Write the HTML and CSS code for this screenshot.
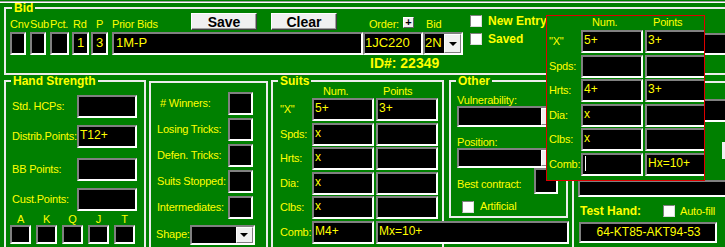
FILE: index.html
```html
<!DOCTYPE html>
<html lang="en">
<head>
    <meta charset="UTF-8">
    <title>Bid Entry</title>
    <link rel="stylesheet" href="styles.css">
</head>
<body>
    <div class="topline"></div>

    <fieldset class="frame bid-frame">
        <legend>Bid</legend>
        <div class="bid-grid">
            <span class="lbl">Cnv</span>
            <span class="lbl">Sub</span>
            <span class="lbl">Pct.</span>
            <span class="lbl lbl-rd">Rd</span>
            <span class="lbl lbl-p">P</span>
            <div class="prior-head">
                <span class="lbl prior-lbl">Prior Bids</span>
                <button class="btn">Save</button>
                <button class="btn clear-btn">Clear</button>
            </div>
            <div class="order-head">
                <span class="lbl">Order:</span>
                <span class="plus-btn">+</span>
            </div>
            <span class="lbl lbl-bid">Bid</span>
            <div class="flags">
                <div class="flag"><span class="check"></span>New Entry</div>
                <div class="flag"><span class="check"></span>Saved</div>
            </div>

            <div class="box big w16"></div>
            <div class="box big w16"></div>
            <div class="box big w19"></div>
            <div class="box big w17 centered">1</div>
            <div class="box big w17 centered">3</div>
            <div class="box big prior-box">1M-P</div>
            <div class="box big order-box">1JC220</div>
            <div class="box big combo bid-combo">2N<span class="drop"></span></div>
            <div class="box big side-box"></div>

            <div class="id-line">ID#: 22349</div>
        </div>
    </fieldset>

    <div class="lower">
        <fieldset class="frame hs-frame">
            <legend>Hand Strength</legend>
            <div class="hs-row"><span class="lbl">Std. HCPs:</span><div class="box hs-box"></div></div>
            <div class="hs-row"><span class="lbl">Distrib.Points:</span><div class="box hs-box">T12+</div></div>
            <div class="hs-row bb-row"><span class="lbl">BB Points:</span><div class="box hs-box"></div></div>
            <div class="hs-row"><span class="lbl">Cust.Points:</span><div class="box hs-box"></div></div>
            <div class="honors">
                <div class="honor"><span class="lbl">A</span><div class="box honor-box"></div></div>
                <div class="honor"><span class="lbl">K</span><div class="box honor-box"></div></div>
                <div class="honor"><span class="lbl">Q</span><div class="box honor-box"></div></div>
                <div class="honor"><span class="lbl">J</span><div class="box honor-box"></div></div>
                <div class="honor"><span class="lbl">T</span><div class="box honor-box"></div></div>
            </div>
        </fieldset>

        <fieldset class="frame win-frame">
            <div class="win-grid">
                <span class="lbl win-first"># Winners:</span><div class="box win-box"></div>
                <span class="lbl">Losing Tricks:</span><div class="box win-box"></div>
                <span class="lbl">Defen. Tricks:</span><div class="box win-box"></div>
                <span class="lbl">Suits Stopped:</span><div class="box win-box"></div>
                <span class="lbl">Intermediates:</span><div class="box win-box"></div>
                <div class="shape-row">
                    <span class="lbl shape-lbl">Shape:</span>
                    <div class="box combo shape-combo"><span class="drop"></span></div>
                </div>
            </div>
        </fieldset>

        <fieldset class="frame suits-frame">
            <legend>Suits</legend>
            <div class="suit-grid">
                <span></span>
                <span class="lbl head-num">Num.</span>
                <span class="lbl head-pts">Points</span>
                <span class="lbl">"X"</span><div class="box">5+</div><div class="box">3+</div>
                <span class="lbl">Spds:</span><div class="box">x</div><div class="box"></div>
                <span class="lbl">Hrts:</span><div class="box">x</div><div class="box"></div>
                <span class="lbl">Dia:</span><div class="box">x</div><div class="box"></div>
                <span class="lbl">Clbs:</span><div class="box">x</div><div class="box"></div>
                <span class="lbl">Comb:</span><div class="box">M4+</div><div class="box comb-wide">Mx=10+</div>
            </div>
        </fieldset>

        <fieldset class="frame other-frame">
            <legend>Other</legend>
            <div class="lbl other-lbl">Vulnerability:</div>
            <div class="box combo other-combo"><span class="drop"></span></div>
            <div class="lbl other-lbl pos-lbl">Position:</div>
            <div class="box combo other-combo pos-combo"><span class="drop"></span></div>
            <div class="best-row">
                <span class="lbl">Best contract:</span>
                <div class="box best-box"></div>
            </div>
            <div class="art-row"><span class="check"></span><span class="lbl">Artificial</span></div>
        </fieldset>

        <fieldset class="frame right-frame">
            <div class="box right-box"></div>
            <div class="right-btn"></div>
            <div class="box right-box2"></div>
            <div class="test-row">
                <span class="test-lbl">Test Hand:</span>
                <span class="check"></span>
                <span class="lbl">Auto-fill</span>
            </div>
            <div class="box test-box">64-KT85-AKT94-53</div>
        </fieldset>
    </div>

    <div class="popup">
        <div class="suit-grid popup-grid">
            <span></span>
            <span class="lbl head-num">Num.</span>
            <span class="lbl popup-pts">Points</span>
            <span class="lbl">"X"</span><div class="box">5+</div><div class="box">3+</div>
            <span class="lbl">Spds:</span><div class="box"></div><div class="box"></div>
            <span class="lbl">Hrts:</span><div class="box">4+</div><div class="box">3+</div>
            <span class="lbl">Dia:</span><div class="box">x</div><div class="box"></div>
            <span class="lbl">Clbs:</span><div class="box">x</div><div class="box"></div>
            <span class="lbl">Comb:</span><div class="box"><span class="caret"></span></div><div class="box">Hx=10+</div>
        </div>
    </div>
</body>
</html>
```

FILE: styles.css
```css
body {
    margin: 0;
    width: 725px;
    height: 247px;
    overflow: hidden;
    position: relative;
    background: #008000;
    color: #ffff00;
    font-family: "Liberation Sans", Arial, sans-serif;
    font-size: 11px;
}
.topline {
    height: 1px;
    margin-top: 1px;
    background: #a0a0a0;
    border-bottom: 1px solid #ffffff;
}
.frame {
    box-sizing: border-box;
    flex: none;
    margin: 0;
    padding: 0;
    min-inline-size: 0;
    border: 2px solid #ececec;
}
.frame legend {
    font-weight: bold;
    font-size: 12px;
    line-height: 12px;
    padding: 0 2px;
    margin-left: -1px;
}
.lbl {
    font-size: 11px;
    line-height: 13px;
    letter-spacing: -0.2px;
    white-space: nowrap;
}
.box {
    box-sizing: border-box;
    flex: none;
    height: 23px;
    background: #000;
    border: 2px solid;
    border-color: #808080 #ffffff #ffffff #808080;
    color: #ffff00;
    font-size: 12px;
    line-height: 17px;
    padding-left: 1px;
    white-space: nowrap;
    overflow: hidden;
}
.box.big { font-size: 13px; }
.centered { text-align: center; padding-left: 0; }
.combo {
    display: flex;
    padding-right: 0;
}
.drop {
    box-sizing: border-box;
    width: 17px;
    height: 100%;
    margin-left: auto;
    background: #f0f0f0;
    border: 1px solid;
    border-color: #ffffff #808080 #808080 #ffffff;
    display: flex;
    align-items: center;
    justify-content: center;
}
.drop::after {
    content: "";
    border-left: 4px solid transparent;
    border-right: 4px solid transparent;
    border-top: 4px solid #000;
}
.check {
    box-sizing: border-box;
    width: 12px;
    height: 12px;
    flex: none;
    background: #fff;
    border: 1px solid;
    border-color: #808080 #dcdcdc #dcdcdc #808080;
}

/* bid frame */
.bid-frame {
    margin-left: 4px;
    width: 760px;
    height: 72px;
    padding-left: 4px;
}
.bid-frame legend { margin-left: 2px; line-height: 10px; }
.bid-grid {
    display: grid;
    grid-template-columns: 20px 20px 22px 19px 21px 251px 60px 47px 105px 200px;
    grid-template-rows: 18px 23px auto;
    row-gap: 1px;
    align-items: end;
}
.bid-grid > .box { grid-row: 2; }
.lbl-rd { padding-left: 1px; }
.lbl-p { width: 17px; text-align: center; }
.lbl-bid { padding-left: 3px; }
.w16 { width: 16px; }
.w17 { width: 17px; }
.w19 { width: 19px; }
.prior-box { width: 251px; padding-left: 2px; }
.order-box { width: 60px; padding-left: 0; }
.bid-combo { width: 40px; padding-left: 0; }
.side-box { width: 200px; height: 22px; }
.prior-head {
    display: flex;
    align-items: flex-end;
    height: 18px;
}
.prior-lbl { width: 79px; }
.btn {
    box-sizing: border-box;
    width: 66px;
    height: 17px;
    padding: 0;
    margin: 0 14px 1px 0;
    align-self: flex-start;
    background: #f0f0f0;
    border: 1px solid;
    border-color: #ffffff #404040 #404040 #ffffff;
    box-shadow: inset -1px -1px 0 #a0a0a0;
    color: #000;
    font-family: "Liberation Sans", Arial, sans-serif;
    font-weight: bold;
    font-size: 14px;
    line-height: 14px;
}
.order-head {
    display: flex;
    align-items: flex-end;
    padding-left: 6px;
}
.plus-btn {
    box-sizing: border-box;
    width: 11px;
    height: 11px;
    margin: 0 0 3px 4px;
    background: #f0f0f0;
    border: 1px solid;
    border-color: #ffffff #606060 #606060 #ffffff;
    color: #000;
    font-weight: bold;
    font-size: 11px;
    line-height: 8px;
    text-align: center;
}
.flags {
    grid-column: 9;
    grid-row: 1 / span 2;
    align-self: start;
    display: flex;
    flex-direction: column;
    gap: 6px;
    padding-top: 2px;
}
.flag {
    display: flex;
    align-items: center;
    gap: 6px;
    font-weight: bold;
    font-size: 12px;
    line-height: 12px;
    white-space: nowrap;
}
.id-line {
    grid-row: 3;
    grid-column: 7 / span 3;
    padding-left: 7px;
    font-weight: bold;
    font-size: 14px;
    line-height: 14px;
}

/* lower section */
.lower {
    display: flex;
    align-items: flex-start;
}
.hs-frame {
    margin-left: 4px;
    width: 142px;
    height: 190px;
    padding: 8px 7px 0 6px;
}
.hs-row {
    display: flex;
    align-items: center;
    justify-content: space-between;
}
.hs-row + .hs-row { margin-top: 7px; }
.hs-row.bb-row { margin-top: 10px; }
.hs-box { width: 60px; }
.honors {
    display: flex;
    gap: 5px;
    margin: 2px 0 0 -2px;
}
.honor {
    display: flex;
    flex-direction: column;
    align-items: center;
}
.honor .lbl { line-height: 12px; }
.honor-box { width: 21px; height: 19px; }

.win-frame {
    margin: 6px 0 0 3px;
    width: 119px;
    height: 180px;
    padding: 9px 0 0 6px;
}
.win-grid {
    display: grid;
    grid-template-columns: 71px 25px;
    grid-auto-rows: 23px;
    row-gap: 3px;
    align-items: center;
}
.win-first { padding-left: 3px; }
.win-box { width: 25px; }
.shape-row {
    grid-column: 1 / -1;
    display: flex;
    align-items: center;
    margin-top: 2px;
}
.shape-lbl { width: 37px; margin-left: -1px; }
.shape-combo { width: 65px; height: 20px; }

.suits-frame {
    margin-left: 3px;
    width: 173px;
    height: 190px;
    padding-left: 7px;
}
.suits-frame legend { margin-left: -2px; }
.suit-grid {
    display: grid;
    grid-template-columns: 32px 64px 62px;
    grid-template-rows: 9.4px repeat(6, 23px);
    row-gap: 1.6px;
    align-items: center;
}
.suit-grid .box { width: 62px; }
.suit-grid .box.comb-wide { width: 193px; }
.head-num { padding-left: 11px; line-height: 9px; }
.head-pts { padding-left: 7px; line-height: 9px; }

.other-frame {
    margin-left: 5px;
    width: 119px;
    height: 143px;
    padding-left: 6px;
}
.other-lbl { margin-top: 7px; line-height: 12px; }
.other-lbl.pos-lbl { margin-top: 9px; }
.other-combo { width: 103px; height: 21px; }
.other-combo.pos-combo { height: 20px; }
.best-row {
    display: flex;
    align-items: center;
    height: 26px;
}
.best-row .lbl { margin-top: 6px; width: 77px; }
.best-box { width: 24px; height: 26px; }
.art-row {
    display: flex;
    align-items: center;
    gap: 6px;
    margin: 6px 0 0 5px;
}

.right-frame {
    margin: 6px 0 0 4px;
    width: 200px;
    height: 180px;
    padding: 16px 0 0 4px;
}
.right-box { width: 200px; }
.right-btn {
    width: 20px;
    height: 17px;
    margin: 20px 0 0 144px;
    background: #f0f0f0;
}
.right-box2 { width: 200px; height: 17px; margin-top: 21px; }
.test-row {
    display: flex;
    align-items: center;
    margin-top: 8px;
    height: 12px;
}
.test-lbl {
    width: 83px;
    margin-left: 2px;
    font-weight: bold;
    font-size: 12px;
    white-space: nowrap;
}
.test-row .lbl { margin-left: 5px; }
.test-box {
    width: 138px;
    height: 21px;
    margin: 5px 0 0 1px;
    text-align: center;
}

/* expanded suits popup */
.popup {
    position: absolute;
    left: 546px;
    top: 15px;
    width: 159px;
    height: 166px;
    box-sizing: border-box;
    border: 1px solid #dd0000;
    background: #008000;
    overflow: hidden;
    padding-left: 2px;
}
.popup-grid { grid-template-rows: 12.4px repeat(6, 23px); }
.popup-pts { padding-left: 8px; line-height: 9px; }
.caret {
    display: inline-block;
    width: 1px;
    height: 15px;
    margin: 1px 0 0 1px;
    background: #fff;
    vertical-align: top;
}
```
